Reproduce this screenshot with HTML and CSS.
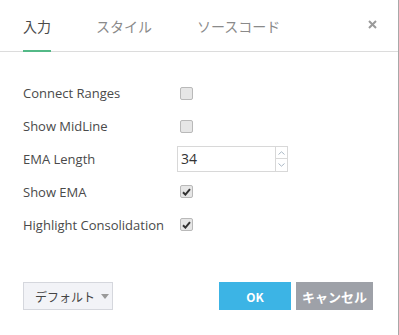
FILE: index.html
```html
<!DOCTYPE html>
<html lang="ja">
<head>
<meta charset="UTF-8">
<title>設定</title>
<link rel="stylesheet" href="styles.css">
</head>
<body>
  <div class="dialog">
    <header class="tabs">
      <a class="tab active">入力</a>
      <a class="tab">スタイル</a>
      <a class="tab">ソースコード</a>
      <span class="close">
        <svg width="9" height="9" viewBox="0 0 9 9"><path d="M1 1L8 8M8 1L1 8" stroke="#9a9a9a" stroke-width="2"/></svg>
      </span>
    </header>

    <div class="content">
      <div class="row">
        <span class="label">Connect Ranges</span>
        <span class="check"></span>
      </div>
      <div class="row">
        <span class="label">Show MidLine</span>
        <span class="check"></span>
      </div>
      <div class="row">
        <span class="label">EMA Length</span>
        <div class="number">
          <span class="value">34</span>
          <div class="spin">
            <span><svg width="7" height="4" viewBox="0 0 7 4"><path d="M0.5 3.5L3.5 0.8L6.5 3.5" fill="none" stroke="#a9b7c4"/></svg></span>
            <span><svg width="7" height="4" viewBox="0 0 7 4"><path d="M0.5 0.5L3.5 3.2L6.5 0.5" fill="none" stroke="#a9b7c4"/></svg></span>
          </div>
        </div>
      </div>
      <div class="row">
        <span class="label">Show EMA</span>
        <span class="check checked">
          <svg width="9" height="8" viewBox="0 0 9 8"><path d="M1 4.2L3.4 6.6L8 1.2" fill="none" stroke="#333" stroke-width="2"/></svg>
        </span>
      </div>
      <div class="row">
        <span class="label">Highlight Consolidation</span>
        <span class="check checked">
          <svg width="9" height="8" viewBox="0 0 9 8"><path d="M1 4.2L3.4 6.6L8 1.2" fill="none" stroke="#333" stroke-width="2"/></svg>
        </span>
      </div>
    </div>

    <footer class="buttons">
      <button class="defaults">デフォルト<span class="caret"></span></button>
      <div class="actions">
        <button class="ok">OK</button>
        <button class="cancel">キャンセル</button>
      </div>
    </footer>
  </div>
</body>
</html>
```

FILE: styles.css
```css
* {
  margin: 0;
  padding: 0;
  box-sizing: border-box;
}

body {
  font-family: "Open Sans", "Noto Sans CJK JP", sans-serif;
  color: #4a4a4a;
  background-color: #fff;
}

.dialog {
  width: 399px;
  height: 335px;
  border-right: 1px solid #a8a8a8;
  display: flex;
  flex-direction: column;
}

.tabs {
  height: 52px;
  border-bottom: 1px solid #dcdcdc;
  display: flex;
  align-items: stretch;
  padding-left: 23px;
  padding-right: 21px;
}

.tab {
  font-family: "Noto Sans CJK JP", sans-serif;
  font-size: 14px;
  color: #8a8a8a;
  margin-right: 45px;
  display: flex;
  align-items: center;
  padding-top: 1px;
  border-bottom: 2px solid transparent;
  margin-bottom: -1px;
}

.tab.active {
  color: #4a4a4a;
  border-bottom-color: #53b987;
}

.close {
  margin-left: auto;
  display: flex;
  align-items: center;
  padding-bottom: 3px;
}

.content {
  padding: 25px 0 0 23px;
}

.row {
  height: 32.8px;
  display: flex;
  align-items: center;
}

.label {
  width: 154px;
  font-size: 13px;
}

.check {
  width: 13px;
  height: 13px;
  margin-left: 3px;
  border: 1px solid #b9b9b9;
  border-radius: 2px;
  background-color: #e6e6e6;
  display: flex;
  align-items: center;
  justify-content: center;
}

.number {
  width: 111px;
  height: 26px;
  border: 1px solid #d8d8d8;
  display: flex;
}

.value {
  flex: 1;
  font-size: 14px;
  color: #333;
  padding-left: 3px;
  display: flex;
  align-items: center;
}

.spin {
  width: 12px;
  border-left: 1px solid #d8d8d8;
  display: flex;
  flex-direction: column;
}

.spin span {
  flex: 1;
  display: flex;
  align-items: center;
  justify-content: center;
}

.spin span + span {
  border-top: 1px solid #d8d8d8;
}

.buttons {
  margin-top: auto;
  padding: 0 25px 25px 23px;
  display: flex;
  justify-content: space-between;
}

.buttons button {
  height: 28px;
  border: none;
  font-family: "Noto Sans CJK JP", sans-serif;
  cursor: pointer;
}

.defaults {
  width: 90px;
  background-color: #f2f3f7;
  border: 1px solid #d5d7dd !important;
  color: #444;
  font-size: 12px;
  display: flex;
  align-items: center;
  padding-left: 11px;
  gap: 6px;
}

.caret {
  width: 0;
  height: 0;
  border-left: 4px solid transparent;
  border-right: 4px solid transparent;
  border-top: 5px solid #9a9a9a;
}

.actions {
  display: flex;
  gap: 5px;
}

.ok {
  width: 72px;
  background-color: #3cb4e5;
  color: #fff;
  font-weight: bold;
  font-size: 12px;
}

.cancel {
  width: 77px;
  background-color: #9ea1a8;
  color: #fff;
  font-weight: bold;
  font-size: 13px;
}
```
